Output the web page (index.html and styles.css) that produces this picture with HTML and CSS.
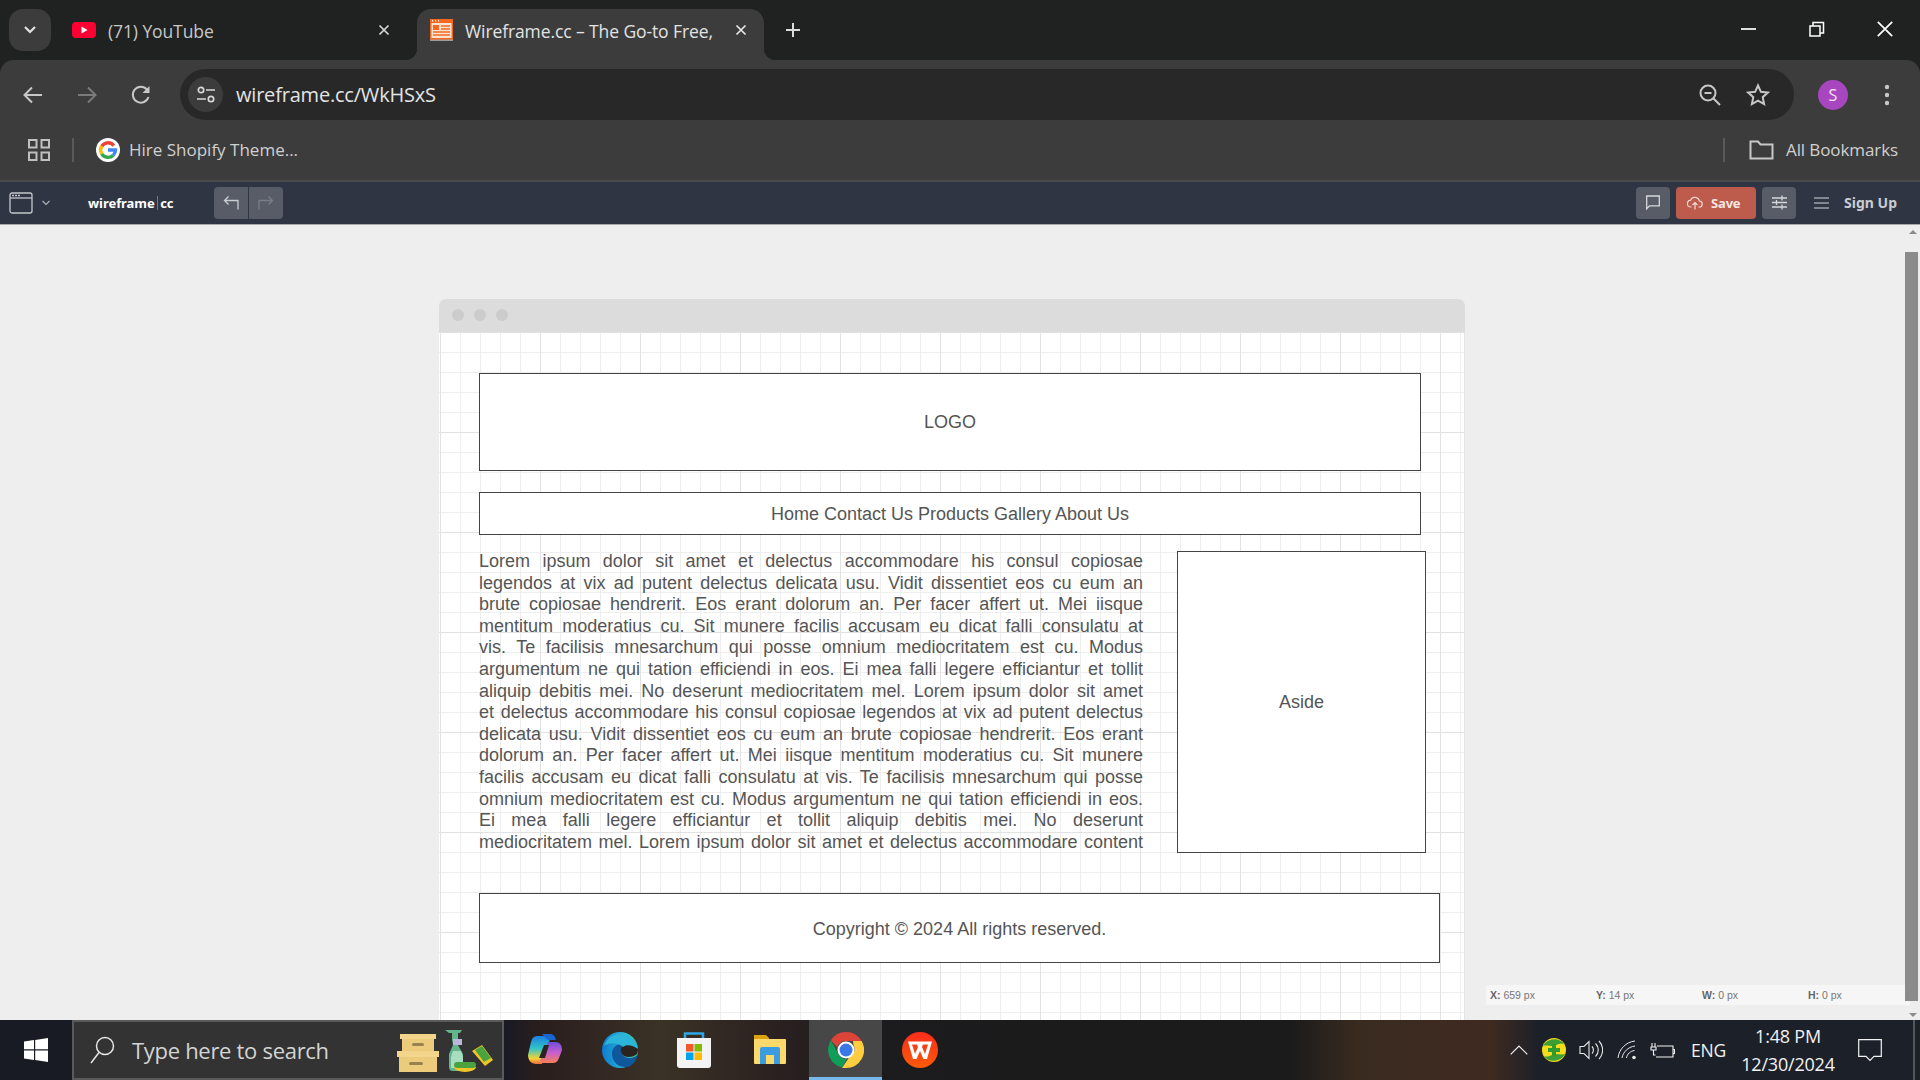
FILE: index.html
```html
<!DOCTYPE html>
<html lang="en">
<head>
<meta charset="utf-8">
<title>Wireframe.cc</title>
<link rel="stylesheet" href="styles.css">
</head>
<body>
<div class="app">
  <header class="tabstrip">
    <button class="tabswitch"><svg width="14" height="10" viewBox="0 0 14 10"><path d="M2 2l5 5 5-5" fill="none" stroke="#e3e3e3" stroke-width="2.2"/></svg></button>
    <div class="tab">
      <svg class="fav" width="24" height="16" viewBox="0 0 24 16"><rect width="24" height="16" rx="4" fill="#ff0033"/><path d="M9.500 4.500l6 3.500-6 3.500z" fill="#fff"/></svg>
      <span class="tab-title">(71) YouTube</span>
      <svg class="tab-x" width="12" height="12" viewBox="0 0 12 12"><path d="M1.500 1.500l9 9M10.500 1.500l-9 9" stroke="#d8d8d8" stroke-width="1.700"/></svg>
    </div>
    <div class="tab tab-active">
      <svg class="fav-wf" width="23" height="22" viewBox="0 0 23 22"><rect width="23" height="22" fill="#f4691f"/><rect x="1.500" y="4" width="20" height="15" fill="#fbe3d2"/><rect x="3" y="6" width="6" height="5" fill="#f4691f"/><path d="M11 7h9M11 10h9M3 13h17M3 16h17" stroke="#f4691f" stroke-width="1.500"/><path d="M2 1.800h1M5 1.800h1M8 1.800h1" stroke="#fff" stroke-width="1.500"/><rect y="20.500" width="23" height="1.500" fill="#9a9a9a"/></svg>
      <span class="tab-title">Wireframe.cc – The Go-to Free,</span>
      <svg class="tab-x" width="12" height="12" viewBox="0 0 12 12"><path d="M1.500 1.500l9 9M10.500 1.500l-9 9" stroke="#e8e8e8" stroke-width="1.700"/></svg>
    </div>
    <button class="newtab"><svg width="16" height="16" viewBox="0 0 16 16"><path d="M8 1v14M1 8h14" stroke="#dcdcdc" stroke-width="2"/></svg></button>
    <div class="winctl">
      <svg width="68" height="16" viewBox="0 0 68 16"><path d="M0 8h15" stroke="#fff" stroke-width="1.700"/></svg>
      <svg width="68" height="16" viewBox="0 0 68 16"><path d="M1 5h10v10H1zM4 5V1.500h10.500V12H11" fill="none" stroke="#fff" stroke-width="1.500"/></svg>
      <svg width="16" height="16" viewBox="0 0 16 16"><path d="M.8.800l14.400 14.400M15.200.800L.8 15.200" stroke="#fff" stroke-width="1.700"/></svg>
    </div>
  </header>

  <nav class="toolbar">
    <svg class="nav-ic" width="24" height="24" viewBox="0 0 24 24"><path d="M21 12H4M11 4.500L3.500 12l7.500 7.500" fill="none" stroke="#c7c7c7" stroke-width="2"/></svg>
    <svg class="nav-ic" width="24" height="24" viewBox="0 0 24 24"><path d="M3 12h17M13 4.500l7.500 7.500-7.500 7.500" fill="none" stroke="#7a7a7a" stroke-width="2"/></svg>
    <svg class="nav-ic" width="24" height="24" viewBox="0 0 24 24"><path d="M19.500 14a8 8 0 1 1-1.500-7.500" fill="none" stroke="#c7c7c7" stroke-width="2"/><path d="M20.500 3v7h-7z" fill="#c7c7c7"/></svg>
    <div class="omnibox">
      <span class="siteinfo"><svg width="20" height="20" viewBox="0 0 20 20"><circle cx="5" cy="5" r="2.700" fill="none" stroke="#d8d8d8" stroke-width="1.700"/><path d="M10 5h9M1 14h9" stroke="#d8d8d8" stroke-width="1.700"/><circle cx="15" cy="14" r="2.700" fill="none" stroke="#d8d8d8" stroke-width="1.700"/></svg></span>
      <span class="url">wireframe.cc/WkHSxS</span>
      <svg class="omni-zoom" width="24" height="24" viewBox="0 0 24 24"><circle cx="10" cy="10" r="7.500" fill="none" stroke="#c7c7c7" stroke-width="2"/><path d="M6.500 10h7M15.500 15.500l6.500 6.500" stroke="#c7c7c7" stroke-width="2"/></svg>
      <svg class="omni-star" width="24" height="24" viewBox="0 0 24 24"><path d="M12 2.500l2.900 6.300 6.900.8-5.100 4.600 1.400 6.800-6.100-3.400-6.100 3.400 1.400-6.800L2.200 9.600l6.900-.8z" fill="none" stroke="#c7c7c7" stroke-width="2"/></svg>
    </div>
    <span class="avatar">S</span>
    <svg class="kebab" width="6" height="22" viewBox="0 0 6 22"><circle cx="3" cy="3" r="2.200" fill="#c7c7c7"/><circle cx="3" cy="11" r="2.200" fill="#c7c7c7"/><circle cx="3" cy="19" r="2.200" fill="#c7c7c7"/></svg>
  </nav>

  <div class="bookmarks">
    <svg class="apps" width="22" height="22" viewBox="0 0 22 22"><g fill="none" stroke="#c0c0c0" stroke-width="2"><rect x="1" y="1" width="7.500" height="7.500"/><rect x="13.500" y="1" width="7.500" height="7.500"/><rect x="1" y="13.500" width="7.500" height="7.500"/><rect x="13.500" y="13.500" width="7.500" height="7.500"/></g></svg>
    <span class="bm-sep"></span>
    <svg class="g-ic" width="24" height="24" viewBox="0 0 24 24"><circle cx="12" cy="12" r="12" fill="#fff"/><g fill="none" stroke-width="3.400"><path d="M17.800 7.600A7.500 7.500 0 0 0 5.700 8.200" stroke="#ea4335"/><path d="M5.700 8.200a7.500 7.500 0 0 0 0 7.600" stroke="#fbbc05"/><path d="M5.700 15.800a7.500 7.500 0 0 0 11.600 1.400" stroke="#34a853"/><path d="M17.300 17.200A7.500 7.500 0 0 0 19.500 12H12" stroke="#4285f4"/></g></svg>
    <span class="bm-label">Hire Shopify Theme...</span>
    <span class="bm-sep bm-sep-right"></span>
    <svg class="folder" width="25" height="20" viewBox="0 0 25 20"><path d="M1.500 18.500V1.500h7.500l2.500 3h12v14z" fill="none" stroke="#c7c7c7" stroke-width="2"/></svg>
    <span class="bm-label">All Bookmarks</span>
  </div>
  <div class="chrome-line"></div>

  <div class="appbar">
    <svg class="app-window" width="24" height="22" viewBox="0 0 24 22"><rect x="1" y="1" width="22" height="20" rx="2" fill="none" stroke="#c4c7cd" stroke-width="1.300"/><path d="M1 6h22" stroke="#c4c7cd" stroke-width="1.300"/><path d="M3 3.500h2M6 3.500h2M9 3.500h2" stroke="#c4c7cd" stroke-width="1.300"/></svg>
    <svg class="app-chev" width="8" height="6" viewBox="0 0 8 6"><path d="M.5 1l3.500 3.500L7.500 1" fill="none" stroke="#aeb2ba" stroke-width="1.100"/></svg>
    <span class="brand">wireframe<i class="brand-bar"></i>cc</span>
    <div class="undo-group">
      <span class="undo-btn"><svg width="16" height="14" viewBox="0 0 16 14"><path d="M15 13.500V4.500H1.500M5.500 .5l-4 4 4 4" fill="none" stroke="#c9ccd2" stroke-width="1.300"/></svg></span>
      <span class="undo-btn"><svg width="16" height="14" viewBox="0 0 16 14"><path d="M1 13.500V4.500h13.500M10.500 .5l4 4-4 4" fill="none" stroke="#777c86" stroke-width="1.300"/></svg></span>
    </div>
    <div class="appbar-right">
      <span class="app-btn"><svg width="16" height="15" viewBox="0 0 16 15"><path d="M1.700 13.800V1h12.600v9.800H4.500z" fill="none" stroke="#d5d7db" stroke-width="1.300"/></svg></span>
      <span class="save-btn"><svg width="16" height="14" viewBox="0 0 16 14"><path d="M4.500 11H4a3.400 3.400 0 0 1-.4-6.800A4.600 4.600 0 0 1 12.400 5a3 3 0 0 1-.4 6h-.5M8 13.500V6.500M5.500 9L8 6.500 10.500 9" fill="none" stroke="#f3dcd8" stroke-width="1.200"/></svg><span>Save</span></span>
      <span class="app-btn"><svg width="15" height="15" viewBox="0 0 15 15"><path d="M0 3h15M0 7.500h15M0 12h15M10 .5v5M4.500 5v5M10 9.500v5" stroke="#d5d7db" stroke-width="1.300"/></svg></span>
      <svg class="burger" width="15" height="12" viewBox="0 0 15 12"><path d="M0 1h15M0 6h15M0 11h15" stroke="#d5d7db" stroke-width="1.200"/></svg>
      <span class="signup">Sign Up</span>
    </div>
  </div>

  <main class="workspace">
    <section class="canvas">
      <div class="canvas-title"><i class="dot"></i><i class="dot"></i><i class="dot"></i></div>
      <div class="grid">
        <div class="wf wf-logo">LOGO</div>
        <div class="wf wf-nav">Home Contact Us Products Gallery About Us</div>
        <p class="wf-text">Lorem ipsum dolor sit amet et delectus accommodare his consul copiosae<br>legendos at vix ad putent delectus delicata usu. Vidit dissentiet eos cu eum an<br>brute copiosae hendrerit. Eos erant dolorum an. Per facer affert ut. Mei iisque<br>mentitum moderatius cu. Sit munere facilis accusam eu dicat falli consulatu at<br>vis. Te facilisis mnesarchum qui posse omnium mediocritatem est cu. Modus<br>argumentum ne qui tation efficiendi in eos. Ei mea falli legere efficiantur et tollit<br>aliquip debitis mei. No deserunt mediocritatem mel. Lorem ipsum dolor sit amet<br>et delectus accommodare his consul copiosae legendos at vix ad putent delectus<br>delicata usu. Vidit dissentiet eos cu eum an brute copiosae hendrerit. Eos erant<br>dolorum an. Per facer affert ut. Mei iisque mentitum moderatius cu. Sit munere<br>facilis accusam eu dicat falli consulatu at vis. Te facilisis mnesarchum qui posse<br>omnium mediocritatem est cu. Modus argumentum ne qui tation efficiendi in eos.<br>Ei mea falli legere efficiantur et tollit aliquip debitis mei. No deserunt<br>mediocritatem mel. Lorem ipsum dolor sit amet et delectus accommodare content</p>
        <div class="wf wf-aside">Aside</div>
        <div class="wf wf-footer">Copyright © 2024 All rights reserved.</div>
      </div>
    </section>
    <div class="status">
      <span><b>X:</b> 659 px</span><span><b>Y:</b> 14 px</span><span><b>W:</b> 0 px</span><span><b>H:</b> 0 px</span>
    </div>
    <div class="scrollbar">
      <i class="sb-up"></i>
      <i class="sb-thumb"></i>
      <i class="sb-down"></i>
    </div>
  </main>

  <footer class="taskbar">
    <svg class="start" width="24" height="24" viewBox="0 0 24 24"><path d="M0 3.500l10-1.400V11.300H0zM11.200 2L24 0v11.300H11.200zM0 12.600h10v9.300L0 20.500zM11.200 12.600H24V24l-12.800-1.900z" fill="#fff"/></svg>
    <div class="searchbox">
      <svg class="search-ic" width="25" height="28" viewBox="0 0 25 28"><circle cx="15" cy="10" r="8.500" fill="none" stroke="#e6e6e6" stroke-width="1.500"/><path d="M9 16.500L1 27" stroke="#e6e6e6" stroke-width="1.500"/></svg>
      <span class="search-text">Type here to search</span>
      <svg class="search-art" width="100" height="46" viewBox="0 0 100 46"><rect x="6" y="7" width="36" height="5" fill="#f2d58a"/><rect x="8" y="12" width="32" height="12" fill="#eccb7c"/><rect x="18" y="16" width="12" height="3" rx="1.500" fill="#9a8150"/><rect x="3" y="24" width="42" height="6" fill="#f2d58a"/><rect x="5" y="30" width="38" height="15" fill="#eccb7c"/><rect x="15" y="35" width="14" height="3" rx="1.500" fill="#9a8150"/><path d="M51 3h17l-2 3-2 0v6l3 3v0l-2 0-1 3 5 9v13a4 4 0 0 1-4 4H59a4 4 0 0 1-4-4V27l4-9-1-6V6h-3z" fill="#63b58d"/><rect x="59" y="12" width="9" height="6" fill="#b9b8dc"/><path d="M59 24h8l2 6v11H57V30z" fill="#a9ddc0"/><path d="M76 40a11 5 0 0 0 22 0z" fill="#f0c528" transform="translate(-16 0)"/><rect x="60" y="35" width="22" height="6" rx="3" fill="#4ba33f"/><path d="M78 24l10-6 11 15-8 6z" fill="#f0c528"/><path d="M81 23l7-4 9 12-7 4z" fill="#4ba33f"/></svg>
    </div>
    <svg class="tb-ic tb-copilot" width="36" height="36" viewBox="0 0 36 36"><defs><linearGradient id="cpa" x1="0" y1="0" x2="0" y2="1"><stop offset="0" stop-color="#1b7fe0"/><stop offset=".45" stop-color="#31c4c8"/><stop offset=".8" stop-color="#f2d434"/><stop offset="1" stop-color="#ef6b3a"/></linearGradient><linearGradient id="cpb" x1="0" y1="0" x2="0" y2="1"><stop offset="0" stop-color="#6b4fd8"/><stop offset=".5" stop-color="#c65fd0"/><stop offset="1" stop-color="#f57f57"/></linearGradient></defs><path d="M10 4h14l-9 28H9c-5 0-8-4-8-9l3-13c1-4 3-6 6-6z" fill="url(#cpa)"/><path d="M26 31H12l9-21h7c5 0 7 3 7 8l-3 8c-1 3-3 5-6 5z" fill="url(#cpb)"/><path d="M15 2h9c2 0 4 2 5 6h-8z" fill="#1766d2"/><path d="M17 13h5l-4 13h-6z" fill="#2c2420"/></svg>
    <svg class="tb-ic tb-edge" width="36" height="36" viewBox="0 0 36 36"><defs><linearGradient id="edg" x1="0" y1="0" x2="1" y2="0"><stop offset="0" stop-color="#0c7bd1"/><stop offset=".6" stop-color="#2bb3d6"/><stop offset="1" stop-color="#52d98a"/></linearGradient></defs><circle cx="18" cy="18" r="18" fill="url(#edg)"/><path d="M36 22c-3 4-9 5-13 3s-5-7-2-9c3-3 10-2 15 2 0-9-8-15-17-15C11 3 5 7 3 14 8 9 16 9 19 12c-5 0-9 4-9 10 0 7 6 14 15 13 6-1 9-6 11-13z" fill="#10589c"/><path d="M22 24c-4-3-4-8-1-10 3-3 10-2 15 2 0 2 0 4-1 6-3 3-9 4-13 2z" fill="#2a2420"/><path d="M2 14C5 6 11 2 19 2c9 0 16 6 17 15-5-4-12-5-15-2-3-3-11-6-19-1z" fill="#2bb5d8"/></svg>
    <svg class="tb-ic tb-store" width="36" height="36" viewBox="0 0 36 36"><path d="M9 8V1.500h18V8" fill="none" stroke="#2fa6e6" stroke-width="2.500"/><path d="M1 6h34v27a3 3 0 0 1-3 3H4a3 3 0 0 1-3-3z" fill="#f3f3f3"/><rect x="10" y="12" width="7.500" height="7.500" fill="#f05a2c"/><rect x="18.500" y="12" width="7.500" height="7.500" fill="#80ba01"/><rect x="10" y="20.500" width="7.500" height="7.500" fill="#02a4ef"/><rect x="18.500" y="20.500" width="7.500" height="7.500" fill="#ffb902"/></svg>
    <svg class="tb-ic tb-folder" width="36" height="36" viewBox="0 0 36 36"><path d="M2 3h12l3 3v6H2z" fill="#d9a20e"/><rect x="2" y="7" width="32" height="25" rx="1" fill="#fbd96b"/><path d="M8 32V17a2 2 0 0 1 2-2h16a2 2 0 0 1 2 2v15h-6v-9h-8v9z" fill="#3c9ce0"/></svg>
    <div class="tb-active">
      <svg width="36" height="36" viewBox="0 0 36 36"><path d="M18 0a18 18 0 0 1 15.600 9H18a9 9 0 0 0-8.700 6.500L2.900 8.200A18 18 0 0 1 18 0z" fill="#db4437"/><path d="M2.900 8.200l7.700 14.100a9 9 0 0 0 8.200 4.700l-4.700 8.500A18 18 0 0 1 2.900 8.200z" fill="#0f9d58"/><path d="M33.600 9A18 18 0 0 1 18 36h-4l7-10.500A9 9 0 0 0 25.500 13l-.5-4z" fill="#ffcd40"/><circle cx="18" cy="18" r="8.500" fill="#fff"/><circle cx="18" cy="18" r="6.500" fill="#3b78e7"/></svg>
    </div>
    <svg class="tb-ic tb-wps" width="36" height="36" viewBox="0 0 36 36"><defs><linearGradient id="wps" x1="0" y1="0" x2="0" y2="1"><stop offset="0" stop-color="#fa2c1c"/><stop offset="1" stop-color="#fb5a08"/></linearGradient></defs><circle cx="18" cy="18" r="18" fill="url(#wps)"/><path d="M6 9.500h24L25 27h-3.500L18 19l-3.500 8H11zM10 12.500l3 9.500 3-7-1-2.500zM26 12.500h-5l-1 2.500 3 7z" fill="#fff" fill-rule="evenodd"/></svg>
    <div class="tray">
      <svg class="tray-chev" width="18" height="10" viewBox="0 0 18 10"><path d="M.7 9.300L9 1l8.300 8.300" fill="none" stroke="#f2f2f2" stroke-width="1.200"/></svg>
      <svg class="tray-360" width="24" height="24" viewBox="0 0 24 24"><circle cx="12" cy="12" r="12" fill="#f6dd1c"/><path d="M1 8C4 1 17-2 22 6c-5-2-8 2-11 2S4 7 1 8zM23 16c-3 7-16 10-21 2 5 2 8-2 11-2s7 1 10 0z" fill="#3e9e36"/><path d="M10 6h4v4h4v4h-4v4h-4v-4H6v-4h4z" fill="#2f9a2e"/></svg>
      <svg class="tray-vol" width="24" height="20" viewBox="0 0 24 20"><path d="M1 6.500h4L10 1.500v17L5 13.500H1z" fill="none" stroke="#e8e8e8" stroke-width="1.100"/><path d="M13 6.500a5 5 0 0 1 0 7M16.500 3.500a9 9 0 0 1 0 13M20 1a13 13 0 0 1 0 18" fill="none" stroke="#e8e8e8" stroke-width="1.100"/></svg>
      <svg class="tray-wifi" width="20" height="20" viewBox="0 0 20 20"><g fill="none" stroke="#e8e8e8" stroke-width="1"><path d="M1 18C2 9 9 2 18 1"/><path d="M5 18c1-6 6-11 13-12"/><path d="M9.500 18c.5-4 4-7 8-7.500"/></g><circle cx="17" cy="17.500" r="1.800" fill="#e8e8e8"/></svg>
      <svg class="tray-bat" width="25" height="16" viewBox="0 0 25 16"><path d="M7 4h16v11H6M23 7.500h1.500v4H23" fill="none" stroke="#f2f2f2" stroke-width="1.100"/><path d="M2 1v4M5 1v4M1 5h5v3H1zM3.500 8v5h2" fill="none" stroke="#f2f2f2" stroke-width="1.100"/></svg>
      <span class="tray-lang">ENG</span>
      <div class="clock"><span>1:48 PM</span><span>12/30/2024</span></div>
      <svg class="tray-note" width="24" height="23" viewBox="0 0 24 23"><path d="M.7.700h22.600v16.600H16l-4 4-4-4H.7z" fill="none" stroke="#f2f2f2" stroke-width="1.200"/></svg>
      <i class="tray-edge"></i>
    </div>
  </footer>
</div>
</body>
</html>
```
FILE: styles.css
```css
* { box-sizing: border-box; }
html, body { margin: 0; height: 100%; overflow: hidden; }
body { font-family: "Open Sans", "Noto Sans", sans-serif; background: #202221; }
svg { display: block; flex: none; }
button { border: 0; padding: 0; background: none; }
i { font-style: normal; display: block; }

.app { display: flex; flex-direction: column; width: 1920px; height: 1080px; overflow: hidden; }

/* tab strip */
.tabstrip { display: flex; height: 60px; flex: none; background: #202221; align-items: flex-end; position: relative; }
.tabswitch { width: 42px; height: 42px; margin: 0 0 9px 9px; border-radius: 14px; background: #3c3c3c; display: flex; align-items: center; justify-content: center; }
.tab { display: flex; align-items: center; height: 51px; width: 366px; padding: 0 27px 9px 21px; font-size: 17.500px; color: #c7c7c7; letter-spacing: -.1px; flex: none; }
.tab-title { margin-left: 12px; padding-top: 1px; white-space: nowrap; flex: 1; }
.tab-active { width: 347px; padding: 0 17px 9px 13px; background: #3c3c3c; border-radius: 14px 14px 0 0; color: #e3e3e3; position: relative; }
.tab-active::before, .tab-active::after { content: ""; position: absolute; bottom: 0; width: 12px; height: 12px; }
.tab-active::before { left: -12px; background: radial-gradient(circle at 0 0, transparent 12px, #3c3c3c 12.500px); }
.tab-active::after { right: -12px; background: radial-gradient(circle at 100% 0, transparent 12px, #3c3c3c 12.500px); }
.tab-x { flex: none; }
.newtab { margin: 0 0 22px 21px; width: 16px; height: 16px; }
.winctl { margin-left: auto; display: flex; align-self: flex-start; margin-top: 21px; margin-right: 27px; }
.winctl svg { flex: none; }

/* toolbar */
.toolbar { display: flex; align-items: center; height: 60px; flex: none; padding: 9px 0 0 21px; background: #3c3c3c; border-radius: 14px 14px 0 0; gap: 30px; }
.nav-ic { flex: none; }
.omnibox { display: flex; align-items: center; width: 1614px; height: 51px; margin-left: -3px; padding-left: 8px; background: #282828; border-radius: 26px; flex: none; margin-right: -6px; }
.siteinfo { width: 35px; height: 35px; border-radius: 50%; background: #3c3c3c; display: flex; align-items: center; justify-content: center; }
.url { margin-left: 13px; font-size: 20px; color: #e3e3e3; letter-spacing: -.2px; }
.omni-zoom { margin-left: auto; }
.omni-star { margin: 0 24px 0 24px; }
.avatar { width: 30px; height: 30px; border-radius: 50%; background: #a846c0; color: #f5e6f8; font-size: 16px; display: flex; align-items: center; justify-content: center; flex: none; }
.kebab { margin-left: 6px; }

/* bookmarks */
.bookmarks { display: flex; align-items: center; height: 60px; flex: none; padding-left: 28px; background: #3c3c3c; font-size: 17px; color: #d0d0d0; }
.bm-sep { width: 2px; height: 24px; background: #5a5a5a; margin-left: 22px; flex: none; }
.g-ic { margin-left: 22px; }
.bm-label { margin-left: 9px; padding-bottom: 2px; white-space: nowrap; }
.bm-sep-right { margin-left: auto; }
.folder { margin-left: 24px; }
.folder + .bm-label { margin: 0 22px 0 12px; letter-spacing: -.1px; }
.chrome-line { height: 2px; flex: none; background: #4a4a4a; }

/* wireframe app bar */
.appbar { display: flex; align-items: center; height: 43px; flex: none; padding: 0 23px 1px 9px; background: #2f3542; border-bottom: 1px solid #a8a8a8; }
.app-chev { margin-left: 9px; }
.brand { margin-left: 38px; width: 126px; font-family: "Noto Sans", sans-serif; font-weight: 700; font-size: 13px; color: #fff; display: flex; align-items: center; letter-spacing: -.05px; }
.brand-bar { width: 1.500px; height: 14px; background: #d9533f; margin: 0 2px; }
.undo-group { display: flex; gap: 1px; height: 32px; border-radius: 4px; overflow: hidden; }
.undo-btn { width: 34px; background: #575c66; display: flex; align-items: center; justify-content: center; }
.appbar-right { margin-left: auto; display: flex; align-items: center; gap: 6px; }
.app-btn { width: 34px; height: 32px; border-radius: 4px; background: #575c66; display: flex; align-items: center; justify-content: center; }
.save-btn { width: 80px; height: 32px; border-radius: 4px; background: #bd5b4d; display: flex; align-items: center; padding-left: 11px; gap: 8px; font-family: "Noto Sans", sans-serif; font-size: 13px; font-weight: 700; color: #f6e7e4; letter-spacing: -.2px; }
.burger { margin-left: 12px; }
.signup { margin-left: 9px; font-family: "Noto Sans", sans-serif; font-size: 14px; font-weight: 700; color: #c9ccd2; }

/* workspace */
.workspace { flex: 1; min-height: 0; position: relative; background: #eee; padding: 74px 0 0 439px; display: flex; overflow: hidden; }
.canvas { width: 1026px; display: flex; flex-direction: column; flex: none; }
.canvas-title { height: 33px; flex: none; display: flex; align-items: center; gap: 10px; padding: 0 0 2px 13px; background: #dcdcdc; border-radius: 7px 7px 0 0; }
.dot { width: 12px; height: 12px; border-radius: 50%; background: #ccc; }
.grid { flex: 1; position: relative; border-right: 1px solid #e4e4e4;
  background-color: #fff;
  background-image:
    linear-gradient(90deg, #e2e2e2 1px, transparent 1px),
    linear-gradient(0deg, transparent 99px, #e2e2e2 99px),
    linear-gradient(90deg, #eee 1px, transparent 1px),
    linear-gradient(0deg, transparent 19px, #eee 19px);
  background-size: 100px 100px, 100px 100px, 20px 20px, 20px 20px;
  background-position: 1px 0, 1px 0, 1px 0, 1px 0;
}
.wf { position: absolute; display: flex; align-items: center; justify-content: center; background: #fff; border: 1px solid #444; font-family: "Liberation Sans", Arial, sans-serif; font-size: 18px; color: #555; }
.wf-logo { left: 40px; top: 41px; width: 942px; height: 98px; }
.wf-nav { left: 40px; top: 160px; width: 942px; height: 43px; padding-top: 2px; }
.wf-aside { left: 738px; top: 219px; width: 249px; height: 302px; }
.wf-footer { left: 40px; top: 561px; width: 961px; height: 70px; padding-top: 2px; }
.wf-text { position: absolute; left: 40px; top: 219px; width: 664px; margin: 0; font-family: "Liberation Sans", Arial, sans-serif; font-size: 18px; line-height: 21.600px; color: #555; text-align: justify; text-align-last: justify; }

.status { position: absolute; left: 1486px; top: 760px; width: 424px; height: 20px; background: rgba(248,248,248,.8); display: grid; grid-template-columns: repeat(4, 106px); align-items: center; padding-left: 4px; font-family: "Liberation Sans", Arial, sans-serif; font-size: 10.500px; color: #777; }
.status b { color: #666; }
.scrollbar { position: absolute; top: 0; bottom: 0; right: 0; width: 15px; display: flex; flex-direction: column; align-items: center; }
.sb-up { width: 0; height: 0; margin-top: 5px; border: 4px solid transparent; border-top: 0; border-bottom: 4px solid #8b8b8b; border-left-width: 4px; }
.sb-thumb { width: 13px; flex: 1; margin: 18px 2px 0 0; background: #8b8b8b; }
.sb-down { width: 0; height: 0; margin: 12px 0 3px; border: 4px solid transparent; border-bottom: 0; border-top: 4px solid #8b8b8b; }

/* taskbar */
.taskbar { display: flex; align-items: center; height: 60px; flex: none; background: linear-gradient(90deg, #181a24 0, #181a24 503px, #2a1e1e 540px, #3b3226 660px, #2a2020 780px, #1c1b1d 880px, #1b1b1b 1290px, #3a2b20 1360px, #3f2a20 1490px, #1c2029 1540px, #1c2029 1920px); color: #f2f2f2; }
.start { margin-left: 24px; }
.searchbox { display: flex; align-items: center; width: 432px; height: 60px; margin-left: 24px; background: #333; border: 2px solid #5a5a5a; padding-left: 16px; }
.search-text { margin-left: 17px; font-size: 22px; color: #d4d4d4; white-space: nowrap; letter-spacing: -.3px; }
.search-art { margin-left: auto; margin-right: 8px; }
.tb-ic { flex: none; }
.tb-copilot { margin-left: 23px; }
.tb-edge { margin-left: 39px; }
.tb-store { margin-left: 38px; }
.tb-folder { margin-left: 40px; }
.tb-active { width: 73px; height: 60px; margin-left: 21px; background: #474747; border-bottom: 3px solid #76b9ed; display: flex; align-items: center; justify-content: center; padding-top: 3px; flex: none; }
.tb-wps { margin-left: 20px; }
.tray { margin-left: auto; display: flex; align-items: center; height: 60px; position: relative; padding-right: 38px; }
.tray-chev { margin-right: 14px; }
.tray-360 { margin-right: 13px; }
.tray-vol { margin-right: 14px; }
.tray-wifi { margin-right: 13px; }
.tray-bat { margin-right: 16px; }
.tray-lang { font-size: 17.500px; margin-right: 15px; letter-spacing: -.2px; }
.clock { display: flex; flex-direction: column; align-items: center; gap: 4px; font-size: 18px; line-height: 24px; width: 94px; letter-spacing: -.2px; }
.tray-note { margin-left: 23px; }
.tray-edge { position: absolute; right: 5px; top: 0; width: 2px; height: 60px; background: #555; }
```
